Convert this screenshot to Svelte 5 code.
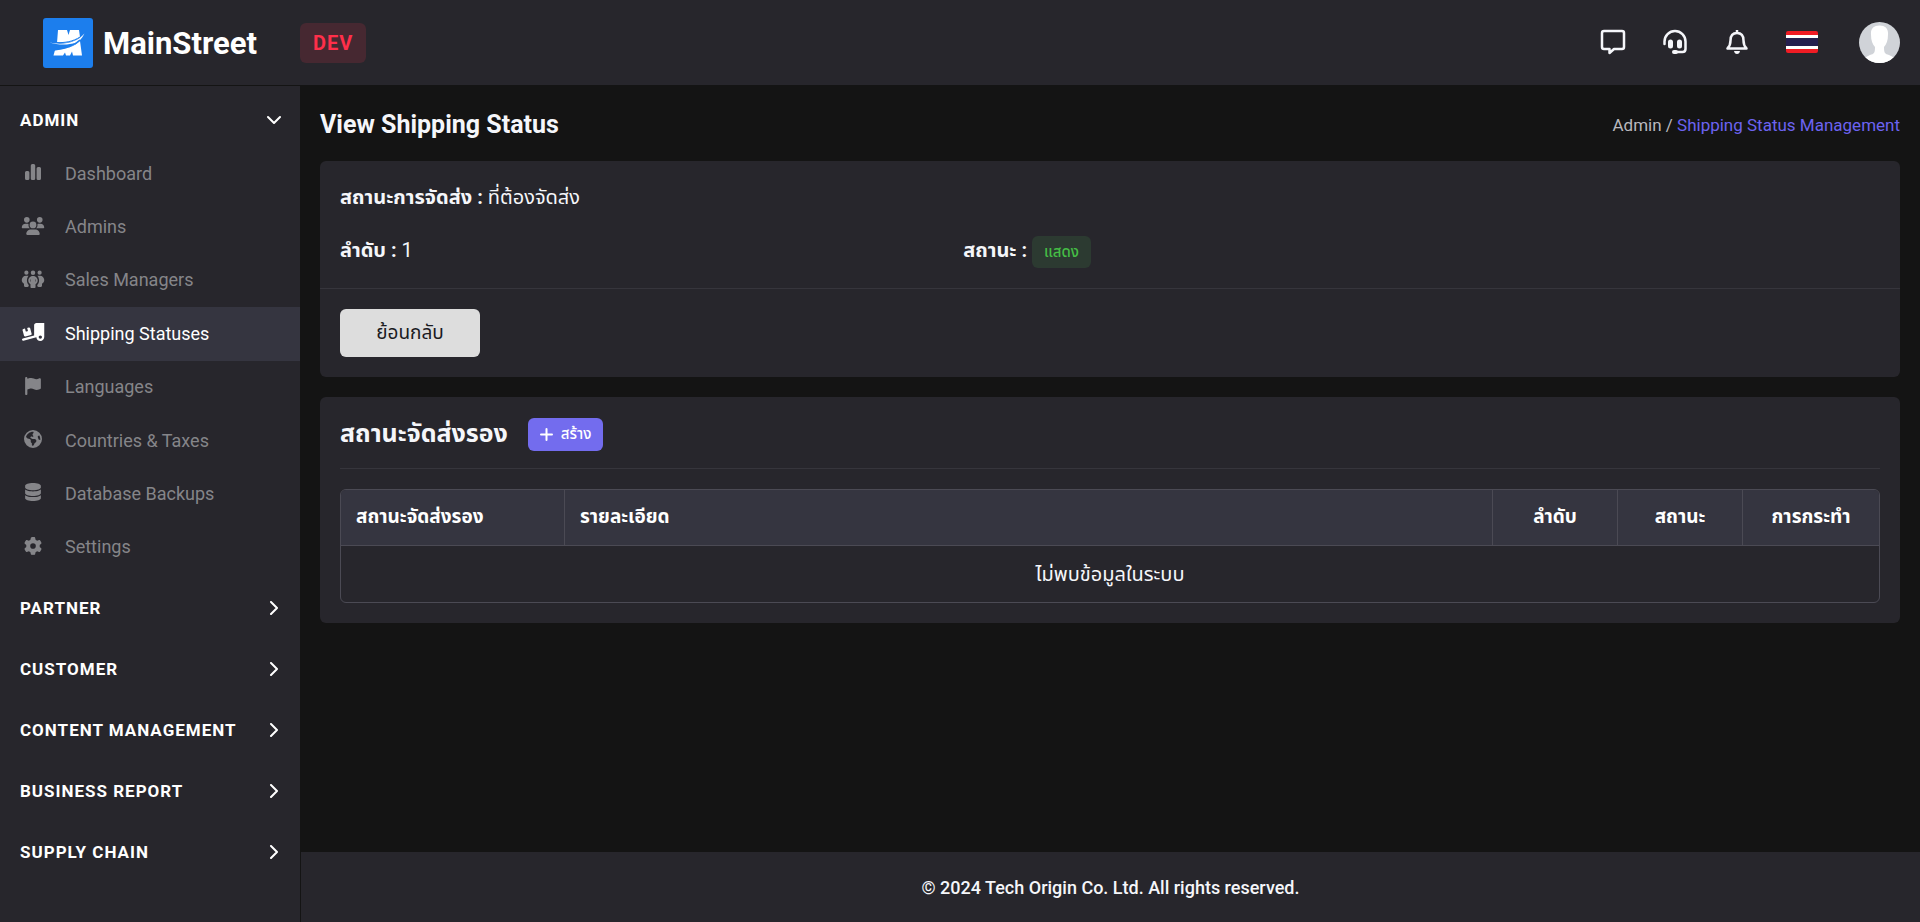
<script lang="ts">
	type Icon = { box: string; d: string; rule?: 'evenodd' };

	const icons: Record<string, Icon> = {
		chart: {
			box: '0 0 18 18',
			d: 'M2.500 8h1.400q1.500 0 1.500 1.500v6q0 1.500-1.500 1.500h-1.400q-1.500 0-1.500-1.500v-6q0-1.500 1.500-1.500zM8.300 1h1.400q1.500 0 1.500 1.500v13q0 1.500-1.500 1.500h-1.400q-1.500 0-1.500-1.500v-13q0-1.500 1.500-1.500zM14.100 4h1.400q1.500 0 1.500 1.500v10q0 1.500-1.500 1.500h-1.400q-1.500 0-1.500-1.500v-10q0-1.500 1.500-1.500z'
		},
		users: {
			box: '0 0 640 512',
			d: 'M144 0a80 80 0 1 1 0 160A80 80 0 1 1 144 0zM512 0a80 80 0 1 1 0 160A80 80 0 1 1 512 0zM0 298.700C0 239.800 47.800 192 106.700 192h42.700c15.900 0 31 3.500 44.600 9.700c-1.300 7.200-1.900 14.700-1.900 22.300c0 38.200 16.800 72.500 43.300 96H21.300C9.600 320 0 310.400 0 298.700zM405.300 320c26.600-23.500 43.300-57.800 43.300-96c0-7.600-.7-15-1.900-22.300c13.600-6.300 28.700-9.700 44.600-9.700h42.700C592.200 192 640 239.800 640 298.700c0 11.800-9.600 21.300-21.300 21.300H405.300zM224 224a96 96 0 1 1 192 0 96 96 0 1 1 -192 0zM128 485.300C128 411.700 187.700 352 261.300 352H378.700C452.300 352 512 411.700 512 485.300c0 14.700-11.900 26.700-26.700 26.700H154.700c-14.700 0-26.700-11.900-26.700-26.700z'
		},
		group: {
			box: '0 0 640 512',
			d: 'M72 76a60 60 0 1 1 120 0A60 60 0 1 1 72 76zM448 76a60 60 0 1 1 120 0A60 60 0 1 1 448 76zM256 76a64 64 0 1 1 128 0A64 64 0 1 1 256 76zM120 160h50c8 0 16 1 24 3-30 35-46 84-46 133 0 50 18 95 50 128v24c0 18-14 32-32 32H96c-18 0-32-14-32-32v-60C26 368 0 332 0 285c0-70 54-125 120-125zM520 160h-50c-8 0-16 1-24 3 30 35 46 84 46 133 0 50-18 95-50 128v24c0 18 14 32 32 32h70c18 0 32-14 32-32v-60c38-20 64-56 64-103 0-70-54-125-120-125zM320 172c72 0 134 54 134 126 0 46-26 84-62 106v76c0 18-14 32-32 32h-80c-18 0-32-14-32-32v-76c-36-22-62-60-62-106 0-72 62-126 134-126zM248 255c-20 26-20 62 0 88zM392 255v88c20-26 20-62 0-88z',
			rule: 'evenodd'
		},
		truck: {
			box: '0 0 640 512',
			d: 'M640 0V400c0 61.900-50.100 112-112 112c-61 0-110.500-48.700-112-109.300L48.400 502.900c-17.100 4.600-34.600-5.400-39.300-22.500s5.400-34.600 22.500-39.300L352 353.800V64c0-35.300 28.700-64 64-64H640zM576 400a48 48 0 1 0 -96 0 48 48 0 1 0 96 0zM23.100 207.700c-4.600-17.100 5.600-34.600 22.600-39.200l46.400-12.400 20.700 77.300c2.300 8.500 11.100 13.600 19.600 11.300l30.900-8.300c8.500-2.300 13.600-11.100 11.300-19.600l-20.700-77.300 46.400-12.400c17.100-4.600 34.600 5.600 39.200 22.600l41.400 154.500c4.600 17.100-5.600 34.600-22.600 39.200L103.700 384.900c-17.100 4.600-34.600-5.600-39.200-22.600L23.100 207.700z'
		},
		flag: {
			box: '0 0 448 512',
			d: 'M64 32C64 14.300 49.700 0 32 0S0 14.300 0 32V480c0 17.700 14.300 32 32 32s32-14.300 32-32V352l64.300-16.100c41.100-10.300 84.600-5.500 122.500 13.400c44.200 22.100 95.500 24.800 141.700 7.400l34.700-13c12.500-4.700 20.800-16.600 20.800-30V66.100c0-23-24.200-38-44.800-27.700l-9.600 4.800c-46.300 23.200-100.800 23.200-147.100 0c-35.100-17.600-75.400-22-113.500-12.500L64 48V32z'
		},
		globe: {
			box: '0 0 512 512',
			d: 'M57.700 193l9.400 16.400c8.300 14.500 21.900 25.200 38 29.800L163 255.700c17.200 4.900 29 20.600 29 38.500v39.900c0 11 6.200 21 16 25.900s16 14.900 16 25.900v39c0 15.600 14.900 26.900 29.900 22.600c16.100-4.600 28.600-17.500 32.700-33.800l2.800-11.200c4.200-16.900 15.200-31.400 30.300-40l8.100-4.600c15-8.500 24.200-24.500 24.200-41.700v-8.300c0-12.700-5.100-24.900-14.100-33.900l-3.900-3.900c-9-9-21.200-14.100-33.900-14.100H257c-11.100 0-22.100-2.900-31.800-8.400l-34.500-19.700c-4.300-2.500-7.600-6.500-9.200-11.200c-3.200-9.600 1.100-20 10.200-24.500l5.900-3c6.600-3.300 14.300-3.900 21.300-1.500l23.200 7.700c8.200 2.700 17.200-.4 21.900-7.500c4.700-7 4.200-16.300-1.200-22.800l-13.600-16.300c-10-12-9.900-29.500 .3-41.300l15.700-18.300c8.800-10.300 10.200-25 3.500-36.700l-2.400-4.200c-3.500-.2-6.900-.3-10.400-.3C163.100 48 84.400 108.900 57.700 193zM464 256c0-36.800-9.600-71.400-26.400-101.500L412 164.800c-15.700 6.300-23.800 23.800-18.500 39.800l16.900 50.700c3.500 10.400 12 18.300 22.600 20.900l29.100 7.300c1.200-9 1.800-18.200 1.800-27.500zM0 256a256 256 0 1 1 512 0A256 256 0 1 1 0 256z',
			rule: 'evenodd'
		},
		database: {
			box: '0 0 448 512',
			d: 'M448 80v48c0 44.200-100.300 80-224 80S0 172.200 0 128V80C0 35.800 100.300 0 224 0S448 35.800 448 80zM393.200 214.700c20.800-7.400 39.900-16.900 54.800-28.600V288c0 44.200-100.300 80-224 80S0 332.200 0 288V186.100c14.900 11.800 34 21.200 54.800 28.600C99.700 230.700 159.500 240 224 240s124.300-9.300 169.200-25.300zM0 346.100c14.900 11.800 34 21.200 54.800 28.600C99.700 390.700 159.500 400 224 400s124.300-9.300 169.200-25.300c20.800-7.400 39.900-16.900 54.800-28.600V432c0 44.200-100.300 80-224 80S0 476.200 0 432V346.100z'
		},
		gear: {
			box: '0 0 512 512',
			d: 'M495.900 166.600c3.200 8.700 .5 18.400-6.400 24.600l-43.300 39.400c1.100 8.300 1.700 16.800 1.700 25.400s-.6 17.100-1.700 25.400l43.300 39.400c6.900 6.200 9.600 15.900 6.400 24.600c-4.400 11.900-9.700 23.300-15.800 34.300l-4.700 8.100c-6.600 11-14 21.400-22.100 31.200c-5.900 7.200-15.700 9.600-24.500 6.800l-55.700-17.700c-13.400 10.300-28.200 18.900-44 25.400l-12.500 57.100c-2 9.100-9 16.300-18.200 17.800c-13.800 2.300-28 3.500-42.500 3.500s-28.700-1.200-42.500-3.500c-9.200-1.500-16.200-8.700-18.200-17.800l-12.500-57.100c-15.800-6.500-30.600-15.100-44-25.400L83.100 425.900c-8.800 2.800-18.600 .3-24.500-6.800c-8.100-9.800-15.500-20.200-22.100-31.200l-4.700-8.100c-6.100-11-11.400-22.400-15.800-34.300c-3.200-8.700-.5-18.400 6.400-24.600l43.300-39.400C64.600 273.100 64 264.600 64 256s.6-17.100 1.700-25.400L22.400 191.200c-6.900-6.200-9.600-15.900-6.400-24.600c4.400-11.900 9.700-23.300 15.800-34.300l4.700-8.100c6.600-11 14-21.400 22.100-31.200c5.900-7.200 15.700-9.600 24.500-6.800l55.700 17.700c13.400-10.300 28.200-18.900 44-25.400l12.500-57.100c2-9.100 9-16.300 18.200-17.800C227.300 1.200 241.500 0 256 0s28.700 1.200 42.500 3.500c9.200 1.500 16.200 8.700 18.200 17.800l12.500 57.100c15.800 6.500 30.600 15.100 44 25.400l55.700-17.700c8.800-2.800 18.600-.3 24.500 6.800c8.100 9.800 15.500 20.200 22.100 31.200l4.700 8.100c6.100 11 11.400 22.400 15.800 34.300zM256 336a80 80 0 1 0 0-160 80 80 0 1 0 0 160z'
		}
	};

	const links = [
		{ label: 'Dashboard', icon: 'chart' },
		{ label: 'Admins', icon: 'users' },
		{ label: 'Sales Managers', icon: 'group' },
		{ label: 'Shipping Statuses', icon: 'truck' },
		{ label: 'Languages', icon: 'flag' },
		{ label: 'Countries & Taxes', icon: 'globe' },
		{ label: 'Database Backups', icon: 'database' },
		{ label: 'Settings', icon: 'gear' }
	];
	const active = 'Shipping Statuses';

	const sections = ['Admin', 'Partner', 'Customer', 'Content Management', 'Business Report', 'Supply Chain'];
	let open = $state('Admin');
</script>

<div class="layout">
	<header class="topbar">
		<a class="brand" href="/">
			<svg width="50" height="50" viewBox="0 0 50 50" aria-hidden="true">
				<rect width="50" height="50" rx="3" fill="#1c7eed" />
				<path d="M15 12h9l1.500 5 1.500-5h9l1 7c-6 5-14 6-23 6z" fill="#fff" />
				<path d="M12 32c11-.5 20-4 25-9l2 14.500h-9l-1-4-2 4h-4l-1-3-2 3H10.500z" fill="#fff" />
				<path d="M6 24.500c15 3 28 0 35.500-9C36 27 24 32 11 32.500c9-1 17-3 22-8C25 27.500 15 27 6 24.500z" fill="#fff" />
				<path d="M11 32c11-1 20-4 26-10" fill="none" stroke="#1c7eed" stroke-width="1.500" />
				<path d="M14 24.500c8 .5 16-1 23-5.500" fill="none" stroke="#1c7eed" stroke-width="1" />
			</svg>
			<span>MainStreet</span>
		</a>
		<span class="env">DEV</span>

		<div class="tools">
			<button aria-label="Messages">
				<svg width="26" height="26" viewBox="0 0 26 26" fill="none" stroke="currentColor" stroke-width="2.500" stroke-linejoin="round">
					<path d="M4 2h18q2 0 2 2v14q0 2-2 2h-8l-4.500 4v-4H4q-2 0-2-2V4q0-2 2-2z" />
				</svg>
			</button>
			<button aria-label="Support">
				<svg width="26" height="26" viewBox="0 0 26 26" fill="none" stroke="currentColor" stroke-width="2.500" stroke-linecap="round">
					<path d="M2.500 15v-2.500a10.500 10.500 0 0 1 21 0V20q0 3-3 3h-8" />
					<path d="M8.500 13v4M17.500 13v4" stroke-width="5" />
					<path d="M12 23h2" stroke-width="4" />
				</svg>
			</button>
			<button aria-label="Notifications">
				<svg width="26" height="26" viewBox="0 0 26 26" fill="none" stroke="currentColor" stroke-width="2.500" stroke-linejoin="round">
					<path d="M13 4c-5 0-6.500 4-6.500 7.500 0 4-1 6-3 8h19c-2-2-3-4-3-8C19.500 8 18 4 13 4zM13 1v3" />
					<path d="M10 22h6q-.5 3-3 3t-3-3z" fill="currentColor" stroke="none" />
				</svg>
			</button>
			<button aria-label="ภาษาไทย">
				<svg width="32" height="22" viewBox="0 0 32 22">
					<rect width="32" height="22" rx="2" fill="#f01c24" />
					<path d="M0 4h32v14H0z" fill="#fff" />
					<path d="M0 7h32v8H0z" fill="#241f4e" />
				</svg>
			</button>
			<button class="account" aria-label="Account">
				<svg width="41" height="41" viewBox="0 0 41 41">
					<clipPath id="face"><circle cx="20.500" cy="20.500" r="20.500" /></clipPath>
					<g clip-path="url(#face)">
						<path d="M0 0h41v41H0z" fill="#d0d3d8" />
						<path d="M20.500 3.500c6 0 9 3.500 8.500 9 0 6-1.500 10-4 12.500 0 6 1 7 5 8l6 3v6H5v-6l6-3c4-1 5-2 5-8-2.500-2.500-4-6.500-4-12.500-.5-5.500 2.500-9 8.500-9z" fill="#fff" />
					</g>
				</svg>
			</button>
		</div>
	</header>

	<nav class="sidebar">
		{#each sections as section}
			<div class="section">
				<button class="toggle" aria-expanded={open === section} onclick={() => (open = open === section ? '' : section)}>
					{section}
					<svg class:down={open === section} width="14" height="14" viewBox="0 0 14 14" fill="none" stroke="currentColor" stroke-width="2" stroke-linecap="round" stroke-linejoin="round" aria-hidden="true">
						<path d="M4 1l6 6-6 6" />
					</svg>
				</button>
				{#if section === 'Admin' && open === 'Admin'}
					<ul>
						{#each links as link}
							{@const icon = icons[link.icon]}
							<li>
								<a href="/admin" class:active={link.label === active}>
									<svg width="24" height="18" viewBox={icon.box} aria-hidden="true">
										<path d={icon.d} fill="currentColor" fill-rule={icon.rule} />
									</svg>
									{link.label}
								</a>
							</li>
						{/each}
					</ul>
				{/if}
			</div>
		{/each}
	</nav>

	<div class="page">
		<main>
			<div class="heading">
				<h1>View Shipping Status</h1>
				<div>Admin / <a href="/admin/shipping-statuses">Shipping Status Management</a></div>
			</div>

			<section class="card">
				<div class="details">
					<div class="wide"><strong>สถานะการจัดส่ง :</strong> ที่ต้องจัดส่ง</div>
					<div><strong>ลำดับ :</strong> 1</div>
					<div><strong>สถานะ :</strong> <span class="badge">แสดง</span></div>
				</div>
				<div class="actions">
					<button class="back">ย้อนกลับ</button>
				</div>
			</section>

			<section class="card list">
				<div class="list-head">
					<h2>สถานะจัดส่งรอง</h2>
					<button class="create">
						<svg width="13" height="13" viewBox="0 0 13 13" stroke="currentColor" stroke-width="2" stroke-linecap="round" aria-hidden="true">
							<path d="M6.500 1v11M1 6.500h11" />
						</svg>
						สร้าง
					</button>
				</div>
				<table>
					<colgroup>
						<col class="name" /><col /><col class="small" /><col class="small" /><col class="last" />
					</colgroup>
					<thead>
						<tr>
							<th>สถานะจัดส่งรอง</th>
							<th>รายละเอียด</th>
							<th class="center">ลำดับ</th>
							<th class="center">สถานะ</th>
							<th class="center">การกระทำ</th>
						</tr>
					</thead>
					<tbody>
						<tr>
							<td colspan="5">ไม่พบข้อมูลในระบบ</td>
						</tr>
					</tbody>
				</table>
			</section>
		</main>
		<footer>© 2024 Tech Origin Co. Ltd. All rights reserved.</footer>
	</div>
</div>

<style>
	:global(body) {
		background: #141414;
	}

	.layout {
		display: grid;
		grid-template-columns: 300px 1fr;
		grid-template-rows: auto 1fr;
		min-height: 100vh;
		color: #f5f6fa;
		font-family: Roboto, "Noto Sans Thai", "Noto Sans", sans-serif;
		font-size: 18px;
		line-height: 24px;
	}

	.layout * {
		box-sizing: border-box;
	}

	svg {
		display: block;
		flex: none;
	}

	button {
		border: 0;
		background: none;
		color: inherit;
		font: inherit;
		cursor: pointer;
	}

	a {
		color: inherit;
		text-decoration: none;
	}

	.topbar {
		grid-column: 1 / -1;
		display: flex;
		align-items: center;
		height: 86px;
		padding: 0 20px 0 43px;
		background: #27262c;
		border-bottom: 1px solid #141414;
	}

	.brand {
		display: flex;
		align-items: center;
		gap: 10px;
		width: 257px;
		font-size: 31px;
		font-weight: 700;
		color: #fff;
	}

	.brand span {
		padding-top: 3px;
	}

	.env {
		padding: 8px 13px;
		border-radius: 6px;
		background: #462831;
		color: #ff2f4a;
		font-size: 20px;
		font-weight: 700;
		letter-spacing: 1px;
	}

	.tools {
		display: flex;
		align-items: center;
		gap: 36px;
		margin-left: auto;
	}

	.tools button {
		padding: 0 0 2px;
	}

	.tools .account {
		margin-left: 5px;
		padding: 0;
	}

	.sidebar {
		background: #27262c;
	}

	.section {
		padding-top: 7px;
	}

	.toggle {
		display: flex;
		align-items: center;
		justify-content: space-between;
		width: 100%;
		height: 54px;
		padding: 0 19px 0 20px;
		color: #fff;
		font-size: 17px;
		font-weight: 700;
		letter-spacing: 1px;
		text-transform: uppercase;
	}

	.down {
		transform: rotate(90deg);
	}

	ul {
		display: grid;
		grid-auto-rows: 1fr;
		min-height: 427px;
		margin: 0;
		padding: 0;
		list-style: none;
	}

	li a {
		display: flex;
		align-items: center;
		gap: 20px;
		height: 100%;
		padding: 0 21px;
		color: #858589;
	}

	li svg {
		margin-bottom: 3px;
	}

	li a.active {
		background: #353540;
		color: #fff;
	}

	.page {
		display: flex;
		flex-direction: column;
		min-width: 0;
		border-left: 1px solid #141414;
	}

	main {
		flex: 1;
		padding: 20px 20px 20px 19px;
	}

	.heading {
		display: flex;
		align-items: center;
		justify-content: space-between;
		height: 37px;
		margin-bottom: 18px;
		color: #b9b9bf;
		font-size: 17px;
	}

	.heading a {
		color: #6c63f0;
	}

	h1,
	h2 {
		margin: 0;
		color: #f5f6fa;
		font-size: 25px;
		font-weight: 700;
		line-height: 32px;
	}

	.card {
		margin-bottom: 20px;
		border-radius: 6px;
		background: #27262c;
	}

	.details {
		display: grid;
		grid-template-columns: 2fr 3fr;
		gap: 20px 12px;
		padding: 20px;
		align-items: center;
		font-size: 20px;
	}

	.details > div {
		line-height: 33px;
	}

	.wide {
		grid-column: 1 / -1;
	}

	.badge {
		display: inline-block;
		padding: 0 12px;
		border-radius: 6px;
		background: #2c3a31;
		color: #45bd45;
		font-size: 15px;
		font-weight: 500;
		line-height: 32px;
		vertical-align: middle;
	}

	.actions {
		padding: 20px;
		border-top: 1px solid #36353c;
	}

	.back {
		display: block;
		min-width: 140px;
		height: 48px;
		border-radius: 6px;
		background: #ddd;
		color: #1b1b1f;
		font-size: 19px;
	}

	.list {
		padding: 20px;
	}

	.list-head {
		display: flex;
		align-items: center;
		gap: 20px;
		height: 52px;
		margin-bottom: 20px;
		padding-bottom: 16px;
		border-bottom: 1px solid #36353c;
	}

	.create {
		display: flex;
		align-items: center;
		gap: 8px;
		height: 33px;
		padding: 0 12px;
		border-radius: 6px;
		background: #736cee;
		color: #fff;
		font-size: 15px;
		font-weight: 500;
	}

	table {
		width: 100%;
		table-layout: fixed;
		border: 1px solid #4b4a54;
		border-spacing: 0;
		border-radius: 6px;
		overflow: hidden;
	}

	.name {
		width: 223px;
	}

	.small {
		width: 125px;
	}

	.last {
		width: 137px;
	}

	th,
	td {
		height: 56px;
		padding: 0 15px;
	}

	th {
		border-bottom: 1px solid #4b4a54;
		background: #353540;
		color: #fff;
		font-size: 19px;
		text-align: left;
	}

	td {
		font-size: 20px;
	}

	th + th {
		border-left: 1px solid #4b4a54;
	}

	th.center,
	td {
		text-align: center;
	}

	footer {
		padding: 24px 20px 22px;
		background: #27262c;
		font-weight: 500;
		text-align: center;
	}
</style>
